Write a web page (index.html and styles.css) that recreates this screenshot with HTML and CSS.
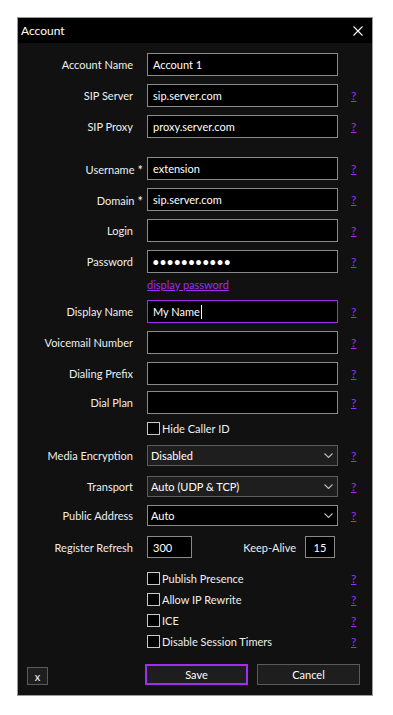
FILE: index.html
```html
<!DOCTYPE html>
<html lang="en">
<head>
  <meta charset="UTF-8">
  <meta name="viewport" content="width=device-width, initial-scale=1.0"/>
  <title>Account</title>
  <link rel="stylesheet" href="styles.css">
</head>
<body>

  <div class="dialog">
    <header class="titlebar">
      <span class="title">Account</span>
      <svg class="close" width="10" height="10" viewBox="0 0 10 10">
        <path d="M0.5 0.5 L9.5 9.5 M9.5 0.5 L0.5 9.5" stroke="#fff" stroke-width="1.1"/>
      </svg>
    </header>

    <form class="form">
      <!-- Server -->
      <div class="row">
        <label>Account Name</label>
        <input class="field" type="text" value="Account 1">
        <span></span>
      </div>
      <div class="row">
        <label>SIP Server</label>
        <input class="field" type="text" value="sip.server.com">
        <a class="help" href="#">?</a>
      </div>
      <div class="row sep">
        <label>SIP Proxy</label>
        <input class="field" type="text" value="proxy.server.com">
        <a class="help" href="#">?</a>
      </div>

      <!-- Credentials -->
      <div class="row">
        <label>Username<span class="req">*</span></label>
        <input class="field" type="text" value="extension">
        <a class="help" href="#">?</a>
      </div>
      <div class="row">
        <label>Domain<span class="req">*</span></label>
        <input class="field" type="text" value="sip.server.com">
        <a class="help" href="#">?</a>
      </div>
      <div class="row">
        <label>Login</label>
        <input class="field" type="text" value="">
        <a class="help" href="#">?</a>
      </div>
      <div class="row flush">
        <label>Password</label>
        <input class="field secret" type="password" value="12345678901">
        <a class="help" href="#">?</a>
      </div>
      <div class="row reveal">
        <span></span>
        <a class="link" href="#">display password</a>
        <span></span>
      </div>

      <!-- Identity -->
      <div class="row">
        <label>Display Name</label>
        <div class="field focused">My Name<span class="caret"></span></div>
        <a class="help" href="#">?</a>
      </div>
      <div class="row">
        <label>Voicemail Number</label>
        <input class="field" type="text" value="">
        <a class="help" href="#">?</a>
      </div>
      <div class="row tight">
        <label>Dialing Prefix</label>
        <input class="field" type="text" value="">
        <a class="help" href="#">?</a>
      </div>
      <div class="row">
        <label>Dial Plan</label>
        <input class="field" type="text" value="">
        <a class="help" href="#">?</a>
      </div>
      <div class="row check wide">
        <span></span>
        <div class="checkbox"><span class="box"></span>Hide Caller ID</div>
        <span></span>
      </div>

      <!-- Network -->
      <div class="row wide">
        <label>Media Encryption</label>
        <div class="select">
          <select><option>Disabled</option></select>
          <svg width="9" height="5" viewBox="0 0 9 5"><path d="M0.5 0.5 L4.5 4.5 L8.5 0.5" fill="none" stroke="#bbb" stroke-width="1.1"/></svg>
        </div>
        <a class="help" href="#">?</a>
      </div>
      <div class="row">
        <label>Transport</label>
        <div class="select">
          <select><option>Auto (UDP &amp; TCP)</option></select>
          <svg width="9" height="5" viewBox="0 0 9 5"><path d="M0.5 0.5 L4.5 4.5 L8.5 0.5" fill="none" stroke="#bbb" stroke-width="1.1"/></svg>
        </div>
        <a class="help" href="#">?</a>
      </div>
      <div class="row wide">
        <label>Public Address</label>
        <div class="select plain">
          <select><option>Auto</option></select>
          <svg width="9" height="5" viewBox="0 0 9 5"><path d="M0.5 0.5 L4.5 4.5 L8.5 0.5" fill="none" stroke="#bbb" stroke-width="1.1"/></svg>
        </div>
        <a class="help" href="#">?</a>
      </div>
      <div class="row timers">
        <label>Register Refresh</label>
        <div class="pair">
          <input class="field short" type="text" value="300">
          <span class="pair-label">Keep-Alive</span>
          <input class="field tiny" type="text" value="15">
        </div>
        <span></span>
      </div>

      <!-- Options -->
      <div class="row check">
        <span></span>
        <div class="checkbox"><span class="box"></span>Publish Presence</div>
        <a class="help" href="#">?</a>
      </div>
      <div class="row check">
        <span></span>
        <div class="checkbox"><span class="box"></span>Allow IP Rewrite</div>
        <a class="help" href="#">?</a>
      </div>
      <div class="row check">
        <span></span>
        <div class="checkbox"><span class="box"></span>ICE</div>
        <a class="help" href="#">?</a>
      </div>
      <div class="row check last">
        <span></span>
        <div class="checkbox"><span class="box"></span>Disable Session Timers</div>
        <a class="help" href="#">?</a>
      </div>
    </form>

    <footer class="footer">
      <button class="btn small" type="button">x</button>
      <div class="actions">
        <button class="btn primary" type="button">Save</button>
        <button class="btn" type="button">Cancel</button>
      </div>
    </footer>
  </div>

</body>
</html>
```

FILE: styles.css
```css
/* Global */
* {
  margin: 0;
  padding: 0;
  box-sizing: border-box;
}

body {
  background: #fff;
  padding: 17px 0 0 17px;
  font-family: Lato, "Noto Sans", sans-serif;
  font-size: 11px;
  color: #eee;
}

/* Dialog frame */
.dialog {
  width: 356px;
  height: 679px;
  border: 1px solid #9a9a9a;
  background: #111;
  display: flex;
  flex-direction: column;
}

.titlebar {
  height: 25px;
  background: #000;
  display: flex;
  align-items: center;
  justify-content: space-between;
  padding: 0 9px 0 3px;
}

.title {
  font-size: 12px;
  color: #fff;
}

/* Form rows */
.form {
  padding-top: 10px;
}

.row {
  display: grid;
  grid-template-columns: 129px 204px 20px;
  align-items: center;
  height: 23px;
  margin-bottom: 8px;
}

.row.sep { margin-bottom: 19px; }
.row.tight { margin-bottom: 6px; }
.row.wide { margin-bottom: 10px; }
.row.flush { margin-bottom: 0; }
.row.last { margin-bottom: 0; }

.row label {
  text-align: right;
  padding-right: 14px;
  white-space: nowrap;
}

.req {
  font-size: 13px;
  margin-left: 3px;
  margin-right: -10px;
  position: relative;
  top: 1px;
}

.field {
  width: 191px;
  height: 23px;
  background: #000;
  border: 1px solid #8a8a8a;
  color: #fff;
  font-family: inherit;
  font-size: 11px;
  padding: 0 5px;
  outline: none;
  display: flex;
  align-items: center;
}

.field.focused {
  border-color: #a22cf0;
}

.caret {
  display: inline-block;
  width: 1px;
  height: 14px;
  background: #fff;
  margin-left: 1px;
}

.field.secret {
  font-size: 13px;
  letter-spacing: -0.4px;
  padding-left: 4px;
}

.help {
  color: #a22cf0;
  font-size: 12px;
  text-decoration: underline;
}

.link {
  color: #a22cf0;
  text-decoration: underline;
  font-size: 11px;
}

.row.reveal {
  height: 16px;
  margin-top: 3px;
  margin-bottom: 8px;
}

/* Checkboxes */
.row.check {
  height: 13px;
}

.checkbox {
  display: flex;
  align-items: center;
  white-space: nowrap;
}

.box {
  width: 13px;
  height: 13px;
  border: 1px solid #c8c8c8;
  background: #000;
  margin-right: 2px;
}

/* Dropdowns */
.row:has(.select) {
  height: 21px;
}

.select {
  position: relative;
  width: 191px;
  height: 21px;
}

.select select {
  appearance: none;
  width: 100%;
  height: 100%;
  background: #1e1e1e;
  border: 1px solid #5c5c5c;
  color: #fff;
  font-family: inherit;
  font-size: 11px;
  padding: 0 3px;
  outline: none;
}

.select.plain select {
  background: #000;
  border-color: #8a8a8a;
}

.select svg {
  position: absolute;
  right: 5px;
  top: 8px;
  pointer-events: none;
}

/* Register refresh / keep-alive */
.row.timers {
  height: 22px;
  margin-bottom: 13px;
}

.pair {
  display: flex;
  align-items: center;
  width: 191px;
}

.field.short {
  width: 45px;
  height: 22px;
}

.field.tiny {
  width: 30px;
  height: 22px;
  padding: 0;
  text-align: center;
  margin-right: 3px;
}

.pair-label {
  margin-left: auto;
  margin-right: 9px;
}

/* Footer buttons */
.footer {
  display: flex;
  align-items: flex-end;
  padding: 0 12px 0 9px;
  margin-top: 17px;
}

.actions {
  display: flex;
  gap: 9px;
  margin-left: auto;
}

.btn {
  width: 103px;
  height: 21px;
  background: #1e1e1e;
  border: 1px solid #5a5a5a;
  color: #fff;
  font-family: inherit;
  font-size: 11px;
}

.btn.primary {
  border: 2px solid #a22cf0;
}

.btn.small {
  width: 21px;
  height: 18px;
}
```
